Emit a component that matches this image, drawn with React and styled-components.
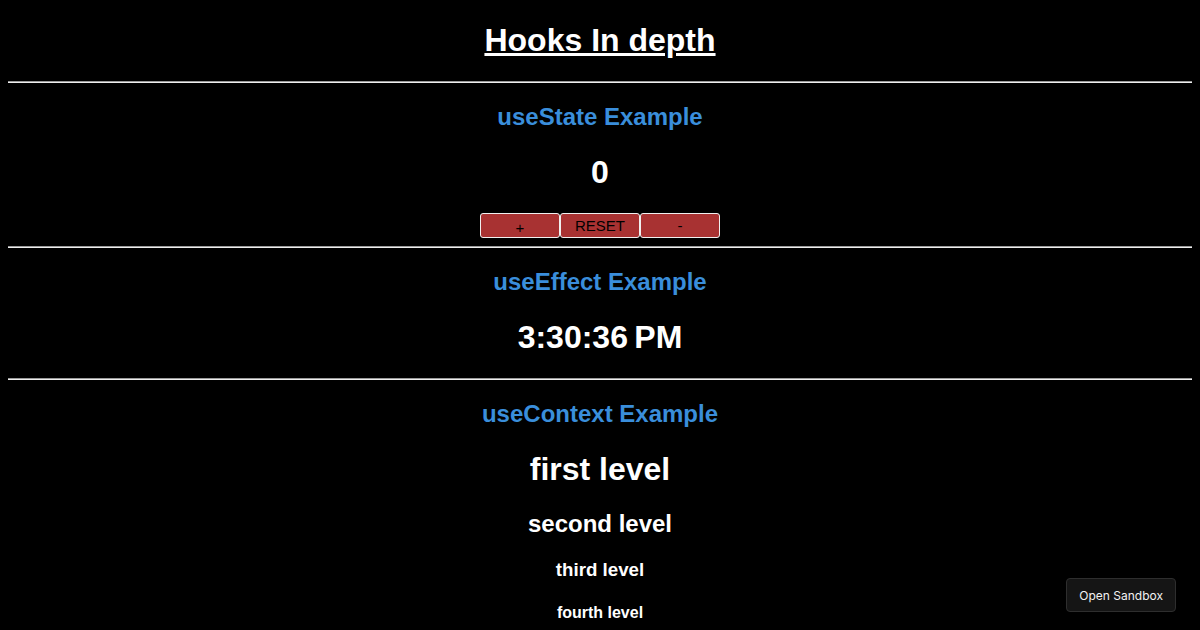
import React from 'react';
import styled, { createGlobalStyle } from 'styled-components';

const GlobalStyle = createGlobalStyle`
    html, body {
        background: #000;
    }
    body {
        margin: 0;
        padding: 0 8px;
        color: #fff;
        font-family: "Liberation Sans", Arial, sans-serif;
        line-height: 1.2;
        text-align: center;
    }
`;

const Title = styled.h1`
    font-size: 32px;
    font-weight: bold;
    text-decoration: underline;
    margin: 21.44px 0;
`;

const Divider = styled.hr`
    margin: 8px 0;
    border: none;
    border-top: 1px solid #9a9a9a;
    border-bottom: 1px solid #eeeeee;
`;

const Section = styled.section`
    display: block;
`;

const ExampleTitle = styled.h2`
    color: #3a8edb;
    font-size: 24px;
    margin: 19.92px 0;
`;

const Heading = styled.div`
    font-weight: bold;
    font-size: ${(p) => p.size}px;
    margin: ${(p) => p.gap}px 0;
`;

const ButtonRow = styled.div`
    display: flex;
    justify-content: center;
`;

const CounterButton = styled.button`
    width: 80px;
    height: 25px;
    background: #a83232;
    color: #000;
    border: 1px solid #f0f0f0;
    border-radius: 3px;
    font-family: "Liberation Sans", Arial, sans-serif;
    font-size: 15px;
    padding: ${(p) => (p.low ? '4px 0 0' : '0')};
`;

const SandboxButton = styled.button`
    position: fixed;
    right: 24px;
    bottom: 18px;
    height: 34px;
    padding: 0 12px;
    background: #151515;
    color: #f2f2f2;
    border: 1px solid #2e2e2e;
    border-radius: 4px;
    font-family: Inter, "Liberation Sans", sans-serif;
    font-size: 12px;
`;

const levels = [
    { text: 'first level', size: 32, gap: 21.44 },
    { text: 'second level', size: 24, gap: 19.92 },
    { text: 'third level', size: 18.72, gap: 18.72 },
    { text: 'fourth level', size: 16, gap: 21.28 },
];

const App = () => {
    return (
        <>
            <GlobalStyle />
            <Title>Hooks In depth</Title>
            <Divider />
            <Section>
                <ExampleTitle>useState Example</ExampleTitle>
                <Heading size={32} gap={21.44}>0</Heading>
                <ButtonRow>
                    <CounterButton low>+</CounterButton>
                    <CounterButton>RESET</CounterButton>
                    <CounterButton>-</CounterButton>
                </ButtonRow>
            </Section>
            <Divider />
            <Section>
                <ExampleTitle>useEffect Example</ExampleTitle>
                <Heading size={32} gap={21.44}>{'3:30:36\u202FPM'}</Heading>
            </Section>
            <Divider />
            <Section>
                <ExampleTitle>useContext Example</ExampleTitle>
                {levels.map((l) => (
                    <Heading key={l.text} size={l.size} gap={l.gap}>{l.text}</Heading>
                ))}
            </Section>
            <SandboxButton>Open Sandbox</SandboxButton>
        </>
    );
};

export default App;
